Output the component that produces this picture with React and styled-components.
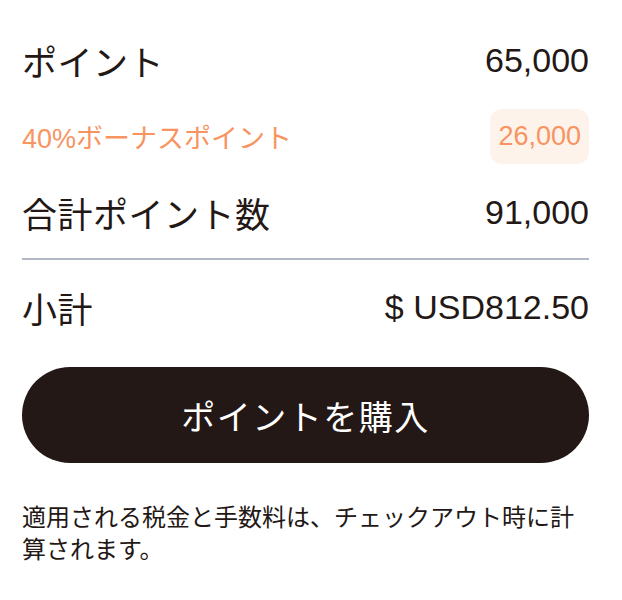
import styled, { createGlobalStyle } from "styled-components";

const GlobalStyle = createGlobalStyle`
    html, body {
        margin: 0;
        padding: 0;
        background: #ffffff;
    }
    body {
        font-family: "Liberation Sans", "Noto Sans CJK JP", sans-serif;
        color: #231815;
    }
`;

const Panel = styled.div`
    width: 622px;
    box-sizing: border-box;
    padding: 22px 33px 0 22px;
    display: flex;
    flex-direction: column;
`;

const Row = styled.div`
    height: ${(p) => p.$height || 76}px;
    display: flex;
    align-items: center;
    justify-content: space-between;
`;

const Label = styled.span`
    font-size: ${(p) => p.$size || 35}px;
    color: ${(p) => p.$color || "#231815"};
    letter-spacing: ${(p) => p.$spacing ?? 0.5}px;
`;

const Value = styled.span`
    font-size: 34px;
    color: #231815;
`;

const Badge = styled.span`
    display: inline-flex;
    align-items: center;
    justify-content: center;
    height: 55px;
    padding: 0 8px;
    border-radius: 12px;
    background: #fef3eb;
    color: #f7945f;
    font-size: 27px;
`;

const Divider = styled.hr`
    margin: 8px 0 0;
    border: none;
    height: 2px;
    background: #b0b8c6;
`;

const BuyButton = styled.button`
    margin-top: 13px;
    height: 96px;
    width: 100%;
    border: none;
    border-radius: 48px;
    background: #231815;
    color: #ffffff;
    font-family: "Noto Sans CJK JP", sans-serif;
    font-size: 34px;
    letter-spacing: 1.5px;
    cursor: pointer;
`;

const Note = styled.p`
    margin: 37px 0 0;
    font-family: "Noto Sans CJK JP", sans-serif;
    font-size: 24px;
    line-height: 32px;
    color: #231815;
`;

const App = () => {
    return (
        <>
            <GlobalStyle />
            <Panel>
                <Row>
                    <Label>ポイント</Label>
                    <Value>65,000</Value>
                </Row>
                <Row>
                    <Label $size={27} $spacing={0} $color="#f7945f">
                        40%ボーナスポイント
                    </Label>
                    <Badge>26,000</Badge>
                </Row>
                <Row>
                    <Label>合計ポイント数</Label>
                    <Value>91,000</Value>
                </Row>
                <Divider />
                <Row $height={94}>
                    <Label>小計</Label>
                    <Value>$ USD812.50</Value>
                </Row>
                <BuyButton>ポイントを購入</BuyButton>
                <Note>
                    適用される税金と手数料は、チェックアウト時に計算されます。
                </Note>
            </Panel>
        </>
    );
};

export default App;
